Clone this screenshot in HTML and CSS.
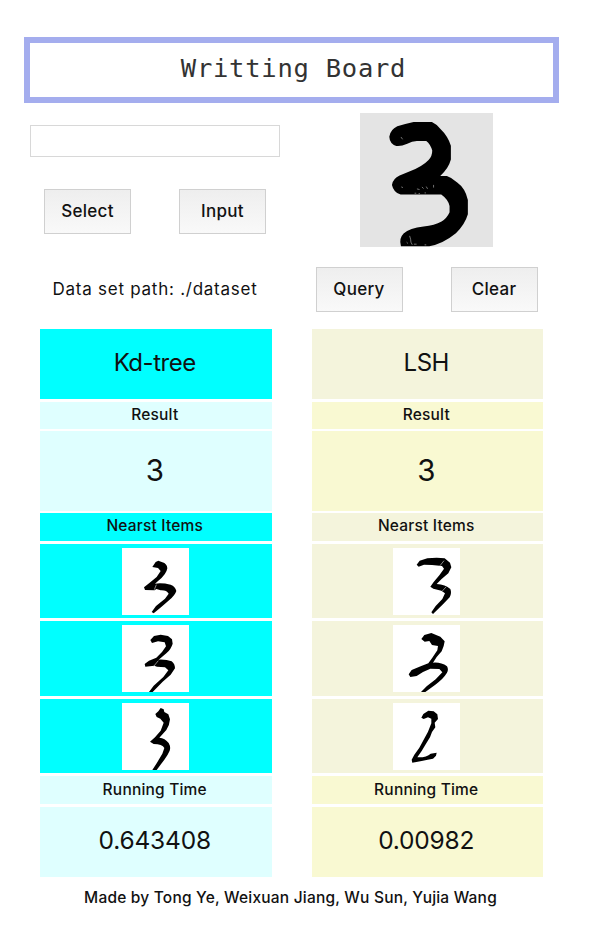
FILE: index.html
```
<!DOCTYPE html>
<html lang="en">
<head>
<meta charset="utf-8">
<title>Writting Board</title>
<link rel="stylesheet" href="styles.css">
</head>
<body>
<main class="board">
  <h1 class="title">Writting Board</h1>
  <div class="controls">
    <section class="panel source">
      <input class="path-input" type="text" aria-label="Path">
      <div class="buttons"><button class="btn">Select</button><button class="btn">Input</button></div>
      <p class="path">Data set path: ./dataset</p>
    </section>
    <section class="panel drawing">
      <svg class="canvas" viewBox="14 14 401 401">
        <path d="M126 54L150 47 175 41H230Q245 48 255 61Q278 83 287 112V154Q280 181 255 203H275Q291 208 306 223Q330 240 338 275V318Q329 349 302 375Q263 407 222 414H137Q130 391 145 376Q163 360 205 355Q238 352 259 340Q275 330 283 312V293Q278 273 258 259H136Q115 253 110 230Q113 211 133 202L164 189Q202 174 220 155Q231 145 231 127Q226 108 213 98H188Q172 97 156 106Q137 115 123 113Q103 106 102 85Q105 64 126 54Z"/>
        <path class="specks" d="M163 383l3 10 1 9 4 8M154 402l4 4M137 86l5 7M200 236l5 5M213 235l4 7M185 242l8 2M235 230v8M138 236l5 2M178 255h5M190 256h4M208 254h4M176 408h8M208 410h5"/>
      </svg>
      <div class="buttons"><button class="btn">Query</button><button class="btn">Clear</button></div>
    </section>
  </div>
  <div class="results">
    <section class="column kd">
      <h2 class="cell name">Kd-tree</h2>
      <div class="cell label pale">Result</div>
      <div class="cell answer pale">3</div>
      <div class="cell label">Nearst Items</div>
      <div class="cell item"><svg class="digit" viewBox="35 21 201 201"><path d="M126 78L136 63 144 59 156 64Q170 68 171 82Q168 101 144 119L134 128Q155 125 181 131Q195 136 198 150Q194 163 177 177L152 199 130 217 124 213 137 195 164 173 175 158Q169 147 151 148L138 144 133 148 104 147 101 139 118 125 139 108 151 90 143 81Z"/><path class="scratch" d="M138 131l-6 15"/></svg></div>
      <div class="cell item"><svg class="digit" viewBox="35 21 201 201"><path d="M120 66L131 54 151 50 173 54 185 64 187 77Q182 94 168 106L145 125Q168 124 184 130Q194 138 194 151L181 170 157 191 127 222H116L130 203 159 177 174 157 164 148 140 146 132 143 105 146 103 138 116 128 138 119 155 102 167 85 163 73 143 70 125 75Z"/><path class="scratch" d="M144 128l-14 17"/></svg></div>
      <div class="cell item"><svg class="digit" viewBox="35 21 201 201"><path d="M135 54L144 46 151 36 160 40 162 48 174 55 179 70Q178 87 168 102L147 125Q164 126 175 141Q182 153 178 164Q172 178 162 191L139 222H126L139 202 156 173 162 156Q156 144 130 144L119 137 134 124 151 104 160 80 150 68 139 63Z"/></svg></div>
      <div class="cell label pale">Running Time</div>
      <div class="cell time pale">0.643408</div>
    </section>
    <section class="column lsh">
      <h2 class="cell name">LSH</h2>
      <div class="cell label pale">Result</div>
      <div class="cell answer pale">3</div>
      <div class="cell label">Nearst Items</div>
      <div class="cell item"><svg class="digit" viewBox="33 21 201 201"><path d="M104 71L113 59 136 52 164 50 188 52 204 65 208 79 199 97 178 115 164 129Q190 131 205 144Q210 156 203 169L183 190 153 219 148 214 161 195 181 174 189 157 178 149 154 143 145 137 155 123 172 103 186 83 180 75 150 72 126 71 110 77Z"/><path class="scratch" d="M186 59l-12 15M192 138l-11 12"/></svg></div>
      <div class="cell item"><svg class="digit" viewBox="33 21 201 201"><path d="M118 63L127 51 148 45 175 56 188 70 185 84 179 100 164 117 153 134Q177 132 195 145Q201 155 194 166Q184 183 160 200L130 222H117L134 205 161 184 181 163 172 153 145 152 123 162 104 174 85 177 80 169 89 156 116 145 139 136 151 119 166 97 168 84 150 81 142 69 128 71Z"/></svg></div>
      <div class="cell item"><svg class="digit" viewBox="33 21 201 201"><path d="M118 65L124 54 139 44 155 46 166 55 168 69 158 80 160 94 150 108 144 124 132 143 119 165 106 184Q134 185 146 173L164 170 162 179 153 188 137 191 119 195 91 200 89 191 97 176 112 155 125 131 138 107 148 82 148 68 138 64 125 69Z"/></svg></div>
      <div class="cell label pale">Running Time</div>
      <div class="cell time pale">0.00982</div>
    </section>
  </div>
  <footer class="credits">Made by Tong Ye, Weixuan Jiang, Wu Sun, Yujia Wang</footer>
</main>
</body>
</html>
```
FILE: styles.css
```
* { box-sizing: border-box; }
body {
  margin: 0;
  background: #fff;
  color: #111;
  font-family: Inter, "Liberation Sans", sans-serif;
  font-size: 15.5px;
  font-weight: 500;
}
.board { width: 535px; margin: 36.5px 0 0 24px; }
.title {
  height: 66.5px;
  margin: 0;
  padding-left: 4px;
  border: 6.5px solid #a4adee;
  text-align: center;
  font: 400 25.5px/51px "DejaVu Sans Mono", monospace;
  letter-spacing: 0.75px;
  color: #333;
}
.controls { display: flex; height: 226px; }
.panel { display: flex; flex-direction: column; align-items: center; }
.source { width: 262px; margin-right: 8px; padding-top: 22px; }
.drawing { width: 265px; padding-top: 10px; }
.path-input {
  width: 250px;
  height: 31.5px;
  margin: 0;
  border: 1px solid #d8d8d8;
  background: #fff;
}
.buttons { display: flex; gap: 48px; }
.source .buttons { margin-top: 32.5px; }
.drawing .buttons { margin-top: 20px; }
.btn {
  width: 87px;
  height: 45px;
  padding: 0 0 1px;
  border: 1px solid #d0d0d0;
  background: linear-gradient(#eee, #f9f9f9);
  color: #111;
  font: 500 17px Inter, "Liberation Sans", sans-serif;
  letter-spacing: 0.3px;
}
.path { margin: 45px 0 0; font-size: 17px; font-weight: 400; line-height: 21px; letter-spacing: 0.75px; }
.canvas { width: 133.5px; height: 133.5px; background: #e4e4e4; }
.specks { fill: none; stroke: #aaa; stroke-width: 2; }
.results { display: flex; gap: 40px; margin-left: 16px; }
.column { display: flex; flex-direction: column; gap: 3px; width: 231.5px; }
.kd { --strong: #00ffff; --pale: #dfffff; }
.lsh { --strong: #f4f4dc; --pale: #f9f9d2; }
.cell { display: flex; align-items: center; justify-content: center; margin: 0; padding-right: 2px; background: var(--strong); }
.pale { background: var(--pale); }
.name, .time { height: 69.7px; font-size: 24.5px; font-weight: 400; }
.name { padding-bottom: 3px; font-size: 24px; letter-spacing: -0.45px; }
.time { padding-bottom: 4px; letter-spacing: -0.2px; }
.label { height: 27.8px; font-size: 15.5px; padding-bottom: 2px; letter-spacing: 0.2px; }
.answer { height: 80px; margin-top: -1.5px; margin-bottom: -1px; font-size: 29.5px; font-weight: 400; padding-bottom: 2px; }
.item { height: 74.5px; }
.kd .item { padding-right: 0.5px; }
.digit { width: 67px; height: 67px; background: #fff; }
.scratch { fill: none; stroke: #ccc; stroke-width: 2; }
.credits { width: 413px; margin: 11px 0 0 60px; text-align: center; font-size: 15.5px; line-height: 20px; letter-spacing: 0.2px; white-space: nowrap; }
```
